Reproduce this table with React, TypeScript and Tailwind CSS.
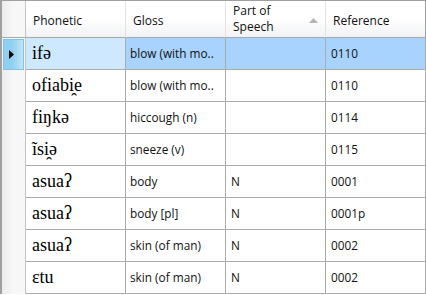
const rows = [
  { phon: "ifə", gloss: "blow (with mo..", pos: "", ref: "0110", selected: true },
  { phon: "ofiabi̯e", gloss: "blow (with mo..", pos: "", ref: "0110" },
  { phon: "fiŋkə", gloss: "hiccough (n)", pos: "", ref: "0114" },
  { phon: "ĩsi̯ə", gloss: "sneeze (v)", pos: "", ref: "0115" },
  { phon: "asuaʔ", gloss: "body", pos: "N", ref: "0001" },
  { phon: "asuaʔ", gloss: "body [pl]", pos: "N", ref: "0001p" },
  { phon: "asuaʔ", gloss: "skin (of man)", pos: "N", ref: "0002" },
  { phon: "ɛtu", gloss: "skin (of man)", pos: "N", ref: "0002" },
]

const sans = "font-['Open_Sans',sans-serif] text-[11.8px] text-[#111]"
const head = "h-[37px] flex items-center pt-[3px] pl-[7px] border-b border-b-[#a8a8a8] bg-gradient-to-b from-white from-50% to-[#f1f2f4] font-['Open_Sans',sans-serif] text-[12px] text-[#111]"

const App = () => {
  return (
    <div className="w-[426px] h-[295px] bg-white overflow-hidden">
      <div className="grid grid-cols-[26px_100px_100px_100px_100px] border-t border-[#a0a0a0]">
        {/* header */}
        <div className="h-[37px] border-l-2 border-[#a0a0a0] border-r border-r-[#c4c4c4] border-b border-b-[#a8a8a8] bg-gradient-to-r from-[#ececec] via-[#f7f7f7] to-[#f7f7f7]" />
        <div className={`${head} border-r border-[#e2e2e2]`}>Phonetic</div>
        <div className={`${head} border-r border-[#e2e2e2]`}>Gloss</div>
        <div className={`${head} !pt-0 justify-between pr-[7px] border-r border-[#e2e2e2] leading-[16px]`}>
          <span>Part of<br />Speech</span>
          <svg width="9" height="5" viewBox="0 0 9 5" className="mt-[2px]">
            <polygon points="0,5 4.5,0 9,5" fill="#b4b4b4" />
          </svg>
        </div>
        <div className={`${head} border-r border-[#a0a0a0]`}>Reference</div>

        {rows.map((r, i) => (
          <div key={i} className="contents">
            <div className={`h-[32px] border-l-2 border-[#a0a0a0] border-r border-r-[#c4c4c4] flex items-center ${r.selected ? "bg-[#f5f6f7]" : "bg-gradient-to-r from-[#ececec] via-[#f7f7f7] to-[#f7f7f7]"}`}>
              {r.selected && (
                <div className="mx-[1px] h-[31px] w-full flex items-center pl-[5px] bg-gradient-to-r from-[#8fd0f0] from-40% to-[#bfe4f7] border border-[#7ec4e8]">
                  <svg width="5" height="9" viewBox="0 0 5 9">
                    <polygon points="0,0 5,4.5 0,9" fill="#000" />
                  </svg>
                </div>
              )}
            </div>
            <div className={`h-[32px] flex items-center pl-[6px] border-r border-b border-[#ababab] font-['Liberation_Serif','DejaVu_Serif',serif] text-[18px] text-black ${r.selected ? "bg-[#cde8ff]" : ""}`}>{r.phon}</div>
            <div className={`h-[32px] flex items-center pl-[4px] border-r border-b border-[#ababab] ${sans} ${r.selected ? "bg-[#a8d3ff]" : ""}`}>{r.gloss}</div>
            <div className={`h-[32px] flex items-center pl-[5px] border-r border-b border-[#ababab] ${sans} ${r.selected ? "bg-[#a8d3ff]" : ""}`}>{r.pos}</div>
            <div className={`h-[32px] flex items-center pl-[5px] border-r border-b border-[#ababab] ${sans} ${r.selected ? "bg-[#a8d3ff]" : ""}`}>{r.ref}</div>
          </div>
        ))}
      </div>
    </div>
  )
}

export default App
